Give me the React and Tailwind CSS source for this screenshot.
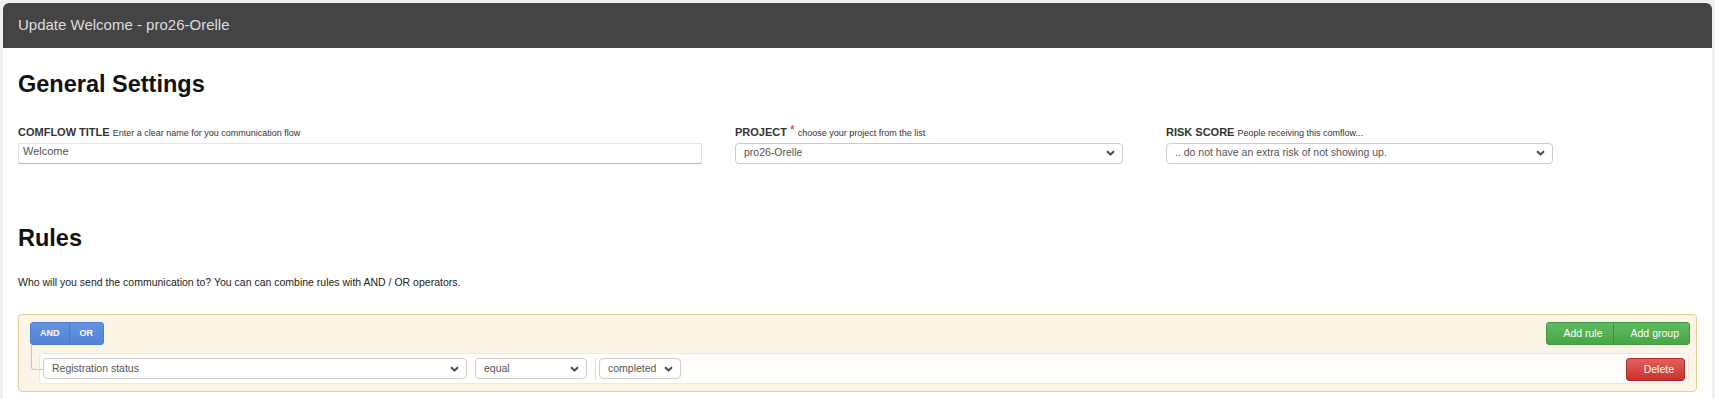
import React from 'react';

const Chevron = () => (
  <svg width="9" height="6" viewBox="0 0 9 6" className="shrink-0">
    <path d="M1 1.2l3.5 3.3L8 1.2" fill="none" stroke="#444" strokeWidth="1.9" />
  </svg>
);

// looks like a bootstrap select, drawn as a div so the text sits where we want it
const FakeSelect = ({value, className}) => (
  <div className={`flex items-center justify-between h-[21px] pl-[8px] pr-[7px] bg-white border border-[#ccc] rounded-[4px] text-[10.5px] text-[#555] ${className}`}>
    <span className="truncate">{value}</span>
    <Chevron />
  </div>
);

const Label = ({title, hint, required}) => (
  <div className="h-[12px] leading-[12px] whitespace-nowrap text-[#333]">
    <span className="text-[11px] font-bold">{title}</span>
    {required&&<span className="ml-[3px] text-[12px] text-[#e02020] align-top leading-[10px]">*</span>}
    <span className="ml-[3px] text-[9px]">{hint}</span>
  </div>
);

const App=() => {
  return (
    <div className="min-h-screen bg-[#f1f1f1] p-[3px] font-['Liberation_Sans',Arial,sans-serif]">
      <div className="bg-white rounded-t-[6px] min-h-[396px]">
        <div className="h-[45px] bg-[#444] rounded-t-[6px] flex items-center px-[15px] text-[15px] text-[#dcdcdc]">
          Update Welcome - pro26-Orelle
        </div>

        <div className="px-[15px] pb-[20px]">
          <h2 className="mt-[25px] text-[23.5px] leading-[23.5px] font-bold text-[#111]">General Settings</h2>

          <div className="flex mt-[28px]">
            <div className="w-[684px]">
              <Label title="COMFLOW TITLE" hint="Enter a clear name for you communication flow" />
              <div className="mt-[6px] h-[21px] pt-[1px] pl-[4px] leading-[12px] border border-[#e4e4e4] border-b-[#b9b9b9] text-[11px] text-[#555]">
                Welcome
              </div>
            </div>
            <div className="ml-[33px] w-[388px]">
              <Label title="PROJECT" hint="choose your project from the list" required />
              <FakeSelect value="pro26-Orelle" className="mt-[6px] w-full" />
            </div>
            <div className="ml-[43px] w-[387px]">
              <Label title="RISK SCORE" hint="People receiving this comflow..." />
              <FakeSelect value=".. do not have an extra risk of not showing up." className="mt-[6px] w-full" />
            </div>
          </div>

          <h2 className="mt-[63px] text-[23.5px] leading-[23.5px] font-bold text-[#111]">Rules</h2>
          <p className="mt-[26px] text-[10.5px] leading-[12px] text-[#222]">
            Who will you send the communication to? You can can combine rules with AND / OR operators.
          </p>

          <div className="relative mt-[26px] border border-[#e3cd97] rounded-[4px] bg-[#fcf5e7] pt-[7px] pb-[7px] pl-[11px] pr-[6px]">
            {/* tree connector from the AND/OR group to the rule */}
            <div className="absolute left-[12px] top-[30px] w-[12px] h-[25px] border-l border-b border-[#c8c8c8] rounded-bl-[3px]" />

            <div className="flex justify-between">
              <div className="flex h-[23px] rounded-[3px] overflow-hidden border border-[#4d7dcf] bg-gradient-to-b from-[#6493e0] to-[#5283d6] text-[9px] font-bold text-white">
                <div className="flex items-center px-[9px]">AND</div>
                <div className="flex items-center px-[10px] border-l border-[#4a78c8]">OR</div>
              </div>
              <div className="flex h-[23px] rounded-[3px] overflow-hidden border border-[#3f973f] bg-gradient-to-b from-[#5fbb5f] to-[#47a647] text-[10.5px] text-white">
                <div className="flex items-center pl-[16px] pr-[10px]">Add rule</div>
                <div className="flex items-center pl-[17px] pr-[10px] border-l border-[#3c8f3c]">Add group</div>
              </div>
            </div>

            <div className="mt-[8px] ml-[9px] mr-[1px] h-[31px] flex items-start pt-[4px] pl-[3px] pr-[3px] bg-[#fffefb] border border-[#efe8d9] rounded-[4px]">
              <FakeSelect value="Registration status" className="w-[424px]" />
              <FakeSelect value="equal" className="ml-[8px] w-[112px]" />
              <div className="ml-[8px] w-px h-[22px] bg-[#ddd]" />
              <FakeSelect value="completed" className="ml-[3px] w-[82px]" />
              <div className="ml-auto flex items-center h-[23px] pl-[17px] pr-[10px] rounded-[3px] border border-[#b52b27] bg-gradient-to-b from-[#e2605b] to-[#c9302c] text-[10.5px] text-white">
                Delete
              </div>
            </div>
          </div>
        </div>
      </div>
    </div>
  );
}

export default App;
